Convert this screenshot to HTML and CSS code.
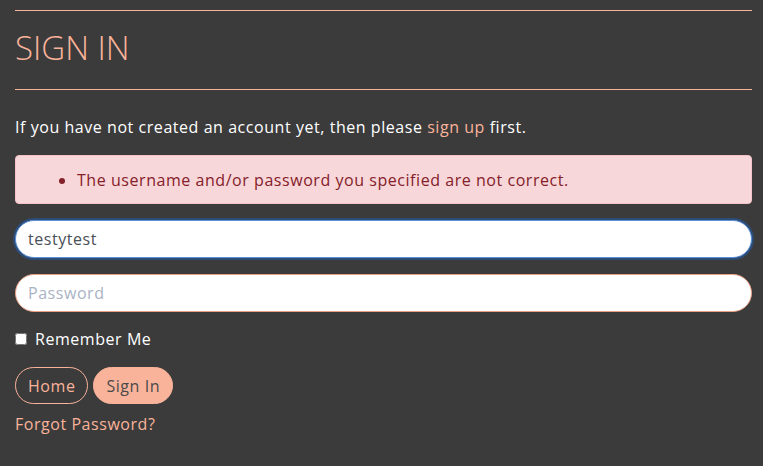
FILE: index.html
```html
<!DOCTYPE html>
<html lang="en">
<head>
<meta charset="utf-8">
<title>Sign In</title>
<link rel="stylesheet" href="styles.css">
</head>
<body>
<main class="page">
  <hr class="rule rule-top">
  <h2 class="title">SIGN IN</h2>
  <hr class="rule rule-bottom">
  <p class="intro">If you have not created an account yet, then please <a class="link" href="#">sign up</a> first.</p>
  <div class="alert">
    <ul class="alert-list">
      <li>The username and/or password you specified are not correct.</li>
    </ul>
  </div>
  <form class="form">
    <input class="field field-focus" type="text" value="testytest">
    <input class="field" type="password" placeholder="Password">
    <label class="remember"><input class="check" type="checkbox"> Remember Me</label>
    <div class="actions">
      <a class="btn btn-outline" href="#">Home</a>
      <button class="btn btn-fill" type="button">Sign In</button>
    </div>
    <a class="link forgot" href="#">Forgot Password?</a>
  </form>
</main>
</body>
</html>
```
FILE: styles.css
```css
* { box-sizing: border-box; }
html, body { margin: 0; padding: 0; }
body {
  background: #3b3b3b;
  color: #ffffff;
  font-family: "Open Sans", "Noto Sans", sans-serif;
  font-size: 16px;
  letter-spacing: 0.55px;
  height: 466px;
  overflow: hidden;
}
.page {
  padding: 10px 11px 0 15px;
}
.rule {
  border: 0;
  border-top: 1px solid #f9b39a;
  margin: 0;
}
.title {
  margin: 20px 0 0;
  height: 58px;
  font-weight: 300;
  font-size: 33px;
  line-height: 1;
  color: #f9b39a;
  letter-spacing: 0;
}
.intro {
  margin: 25px 0 0;
  line-height: 1.5;
  font-size: 16px;
  font-weight: 500;
}
.link {
  color: #f9b39a;
  text-decoration: none;
}
.alert {
  margin-top: 16px;
  background: #f8d7da;
  border: 1px solid #f5c2c7;
  border-radius: 4px;
  color: #842029;
  padding: 12px 16px 11px;
}
.alert-list {
  margin: 0;
  padding-left: 45px;
  font-size: 16px;
  line-height: 24px;
}
.form {
  display: flex;
  flex-direction: column;
  align-items: flex-start;
  margin-top: 16px;
}
.field {
  width: 100%;
  height: 38px;
  border-radius: 19px;
  border: 1px solid #e9a084;
  background: #fff;
  padding: 0 12px;
  font-family: inherit;
  font-size: 16px;
  letter-spacing: 0.55px;
  color: #495057;
  outline: none;
}
.field::placeholder { color: #a9b3c4; }
.field-focus {
  border-color: #5b8fd6;
  box-shadow: 0 0 0 2px #2d4d76;
}
.field + .field { margin-top: 16px; }
.remember {
  display: flex;
  align-items: center;
  gap: 8px;
  margin-top: 16px;
  font-size: 16px;
  font-weight: 500;
}
.check {
  width: 12px;
  height: 12px;
  margin: 0;
}
.actions {
  display: flex;
  gap: 5px;
  margin-top: 17px;
}
.btn {
  display: inline-flex;
  align-items: center;
  justify-content: center;
  height: 37px;
  padding: 0 12px;
  border-radius: 19px;
  font-family: inherit;
  font-size: 16px;
  letter-spacing: 0.55px;
  text-decoration: none;
  cursor: pointer;
}
.btn-outline {
  border: 1px solid #f9b39a;
  color: #f9b39a;
  background: transparent;
}
.btn-fill {
  border: 1px solid #f9b39a;
  background: #f9b39a;
  color: #4a4a4a;
}
.forgot {
  margin-top: 9px;
  font-size: 16px;
  font-weight: 500;
}
```
